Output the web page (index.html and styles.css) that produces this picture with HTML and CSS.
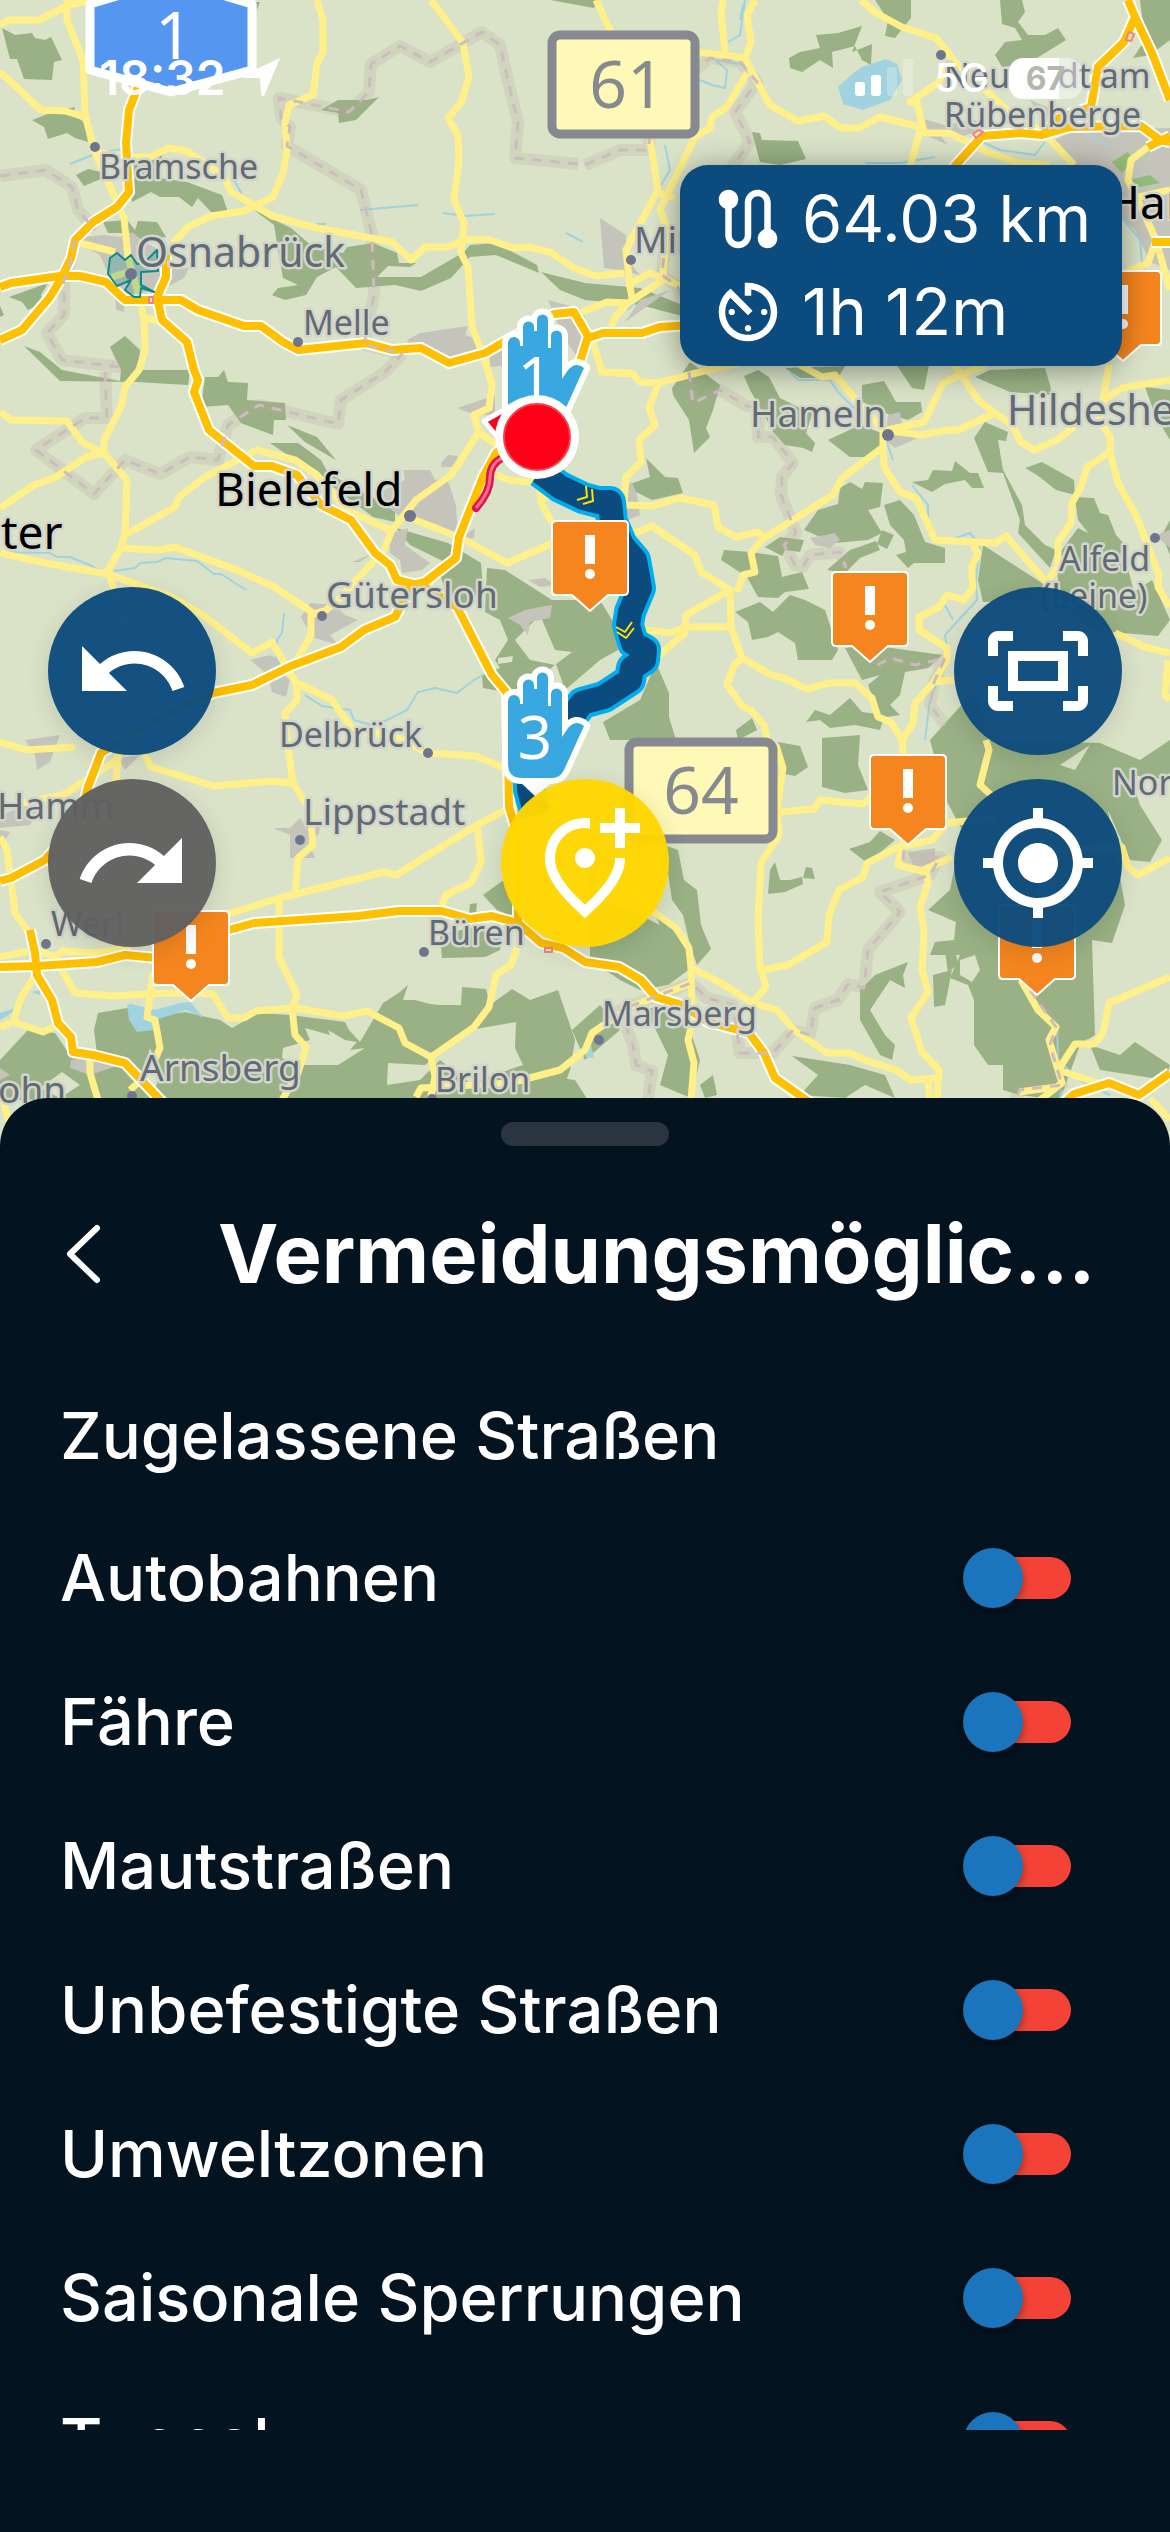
FILE: index.html
```html
<!DOCTYPE html>
<html lang="de">
<head>
    <meta charset="UTF-8">
    <meta name="viewport" content="width=device-width, initial-scale=1.0">
    <title>Vermeidungsmöglichkeiten</title>
    <link rel="stylesheet" href="styles.css">
</head>
<body>
    <div class="app">
        <!-- Map -->
        <section class="map-area">
            <svg class="map" viewBox="0 0 1170 1150" preserveAspectRatio="xMidYMin slice" role="img" aria-label="Karte">
                <defs>
                    <g id="warning">
                        <path class="warning-box" d="M-34 -90h68q4 0 4 4v66q0 4 -4 4H18L0 0L-18 -16H-34q-4 0 -4 -4v-66q0 -4 4 -4z"/>
                        <path fill="#fff" d="M-5 -76H5V-47H-5z"/>
                        <circle fill="#fff" cx="0" cy="-37" r="5"/>
                    </g>
                    <g id="hand">
                        <path fill="#fff" d="M518 422L536 439L554 422z"/>
                        <path class="hand" d="M508 343a6 6 0 0 1 12 0v3h3v-19a5.500 5.500 0 0 1 11 0v4h3v-11a5.500 5.500 0 0 1 11 0v28h3v-12a5.500 5.500 0 0 1 11 0v43l6 -9q8 -9 16 -2L564 412q-4 8 -12 8H522q-14 0 -14 -14z"/>
                    </g>
                    <g id="borders">
                        <path d="M0 176L46 170L72 187L78 210L95 230M75 240L70 265L64 280L64 315L47 333L62 360L120 367L112 362M105 372L107 418L85 418L36 450L94 494L125 460L160 474L190 457L218 460L228 425L259 405L338 424L341 400L385 372L403 353"/>
                        <path d="M578 164L515 158L518 122L510 90L500 45L482 32L430 62L400 46L371 64L369 92L349 112L279 98L281 118L290 127L287 146L361 190L372 235L374 295L364 345L400 353"/>
                        <path d="M585 165L620 150L648 150L655 100L710 58L740 62L757 82L735 112L750 142L730 170M665 240L662 275L678 287L700 362"/>
                        <path d="M689 372L693 403L720 390L745 405L760 410L758 437L773 437L793 463L782 477L781 495L796 533L784 545L795 565L803 567L810 555L840 552L846 568"/>
                        <path d="M877 665L891 658L915 665L945 658L934 682L930 705L945 725M904 850L903 860L940 857L930 875L880 892L900 912L868 950L864 988L848 984L838 1000L815 1008L810 1035L793 1030L773 1053L740 1053L733 1005L707 998L691 983L620 1010L633 1045L636 1065L652 1071L648 1100M1030 990L1056 1027L1050 1045L1062 1085L1020 1090L1015 1100"/>
                    </g>
                    <g id="motorways">
                        <path d="M138 87L129 110L126 143L129 192L117 207L93 222L75 240L71 258L62 277L50 297L22 330L0 340"/>
                        <path d="M0 287L11 283L60 276L80 276L106 282L125 300L181 300L198 310L244 326L261 326L283 342L298 350L366 343L392 350L421 348L449 363L485 353L504 342L554 314L574 312L588 336L580 362L560 400L496 453L483 477L459 537L456 558L425 582L412 585L395 617L364 630L341 647L291 666L252 685L213 693L160 717L101 753L88 787L80 820L45 860L11 878L0 881"/>
                        <path d="M588 338L603 333L642 333L660 327L690 325M166 248L166 277L157 297L162 320L187 342L194 370L198 380L194 392L209 430L254 466L272 466L297 475L321 505L351 520L375 553L390 565L397 580L425 587L457 607L492 675L507 693L509 807L518 837L518 922"/>
                        <path d="M0 967L37 966L97 962L125 955L157 958L229 930L254 923L358 916L399 911L442 911L470 919L492 916L518 923L541 943L563 948L585 962L619 967L641 980L656 997L682 1005L708 1022L749 1033L764 1053L775 1078L812 1104"/>
                        <path d="M30 930L35 953L37 975L52 1000L58 1023L71 1037L73 1052L93 1055L125 1063L144 1083L165 1105M1065 1102L1074 1094L1109 1083L1139 1095L1170 1073"/>
                        <path d="M1128 0L1135 17L1124 42L1098 67L1091 107L1059 118L1042 135L1020 133L982 136L953 168M1135 17L1152 53L1170 100M1042 135L1070 127L1141 126L1160 140L1170 142M1148 147L1170 136M1152 242L1170 242"/>
                    </g>
                    <path id="route" d="M540 472L560 487L583 498L598 502H610L612 522L622 545L635 560L640 588L630 612L628 625L633 643L645 650L644 660L632 668L630 680L604 697L582 703L570 720L545 740L528 765L529 790L536 815"/>
                </defs>

                <rect width="1170" height="1150" fill="#dae3c8"/>

                <g class="forest">
                    <path d="M2 28L15 35L32 33L35 38L45 40L51 37L62 60L54 62L52 80L24 79L17 59L10 59z"/>
                    <path d="M32 120L48 114L75 107L73 115L84 122L88 142L75 138L67 133L48 139L44 127z"/>
                    <path d="M76 175L88 169L101 172L103 178L84 186z"/>
                    <path d="M128 166L162 155L160 178L187 182L222 195L228 212L211 212L198 198L192 207L179 197L160 197L151 192L132 202z"/>
                    <path d="M103 222L127 220L135 230L138 221L157 222L166 237L142 240L132 233L108 233z"/>
                    <path d="M254 210L291 228L313 247L343 253L347 247L373 243L397 253L399 263L416 263L410 267L388 266L377 277L421 277L464 252L470 245L496 243L537 265L539 273L496 255L470 257L451 278L421 291L395 285L356 288L336 267L317 277L306 295L285 300L272 295L278 288L298 285L283 278L278 250L274 225z"/>
                    <path d="M541 272L585 283L640 288L690 308L690 318L640 305L585 300L560 290z"/>
                    <path d="M321 110L338 100L367 100L379 97L356 120L339 123L338 113z"/>
                    <path d="M9 297L48 283L41 295L43 302L28 310L22 302z"/>
                    <path d="M24 346L40 352L62 370L120 381L121 370L110 347L125 336L140 350L138 370L190 370L188 385L136 382L60 381z"/>
                    <path d="M0 306L4 315L0 317zM256 2L260 2L257 10z"/>
                    <path d="M205 377L218 377L224 370L228 382L248 383L247 400L285 403L286 420L274 420L273 435L241 423L228 405L201 407z"/>
                    <path d="M287 425L317 437L336 460L305 442zM270 443L298 443L321 460L328 473L395 510L395 522L373 517L324 480L298 462z"/>
                    <path d="M396 528L448 543L481 563L483 590L463 607L448 597L440 575L455 567L410 545z"/>
                    <path d="M487 568L505 570L552 600L600 600L612 620L618 650L600 660L565 690L556 664L520 695L483 688L482 675L500 668L495 660L508 640L500 620L485 612z"/>
                    <path d="M656 663L669 693L669 717L676 740L610 740L603 722L640 700z"/>
                    <path d="M630 484L650 477L646 458L665 477L678 478L683 493L652 500L630 489z"/>
                    <path d="M672 388L690 362L720 385L713 410L706 428L710 437L694 453L689 420L673 395z"/>
                    <path d="M744 376L758 370L769 377L780 398L800 408L813 412L806 433L815 443L812 452L803 448L785 445L774 433L750 390z"/>
                    <path d="M785 368L845 366L838 378L800 378zM890 355L930 360L924 390L912 388z"/>
                    <path d="M862 385L884 381L896 402L921 402L922 412L908 420L890 415L880 410L862 402z"/>
                    <path d="M828 440L860 425L887 435L872 457L850 457z"/>
                    <path d="M975 377L990 370L1045 368L1050 385L1052 395L1010 392z"/>
                    <path d="M974 438L985 422L1008 432L1006 441L998 440L1003 470L1022 505L1025 525L1045 545L1056 550L1050 568L1018 533L1020 520L1003 473L988 472z"/>
                    <path d="M912 482L928 480L933 470L952 471L955 461L970 473L978 473L984 488L972 488L965 480L945 484L932 492z"/>
                    <path d="M1025 468L1042 462L1074 480L1075 495L1056 490L1037 475z"/>
                    <path d="M804 530L818 510L838 504L840 488L850 482L862 489L865 482L883 483L880 507L868 510L882 533L868 540L835 543z"/>
                    <path d="M884 505L900 500L914 515L925 542L945 548L945 563L914 563L908 568L896 555L906 552L904 540L890 525z"/>
                    <path d="M765 547L780 537L804 540L800 552L785 550L782 556zM882 530L894 535L887 549L877 544z"/>
                    <path d="M827 570L850 550L876 541L880 550L860 558L845 573z"/>
                    <path d="M721 560L724 550L750 552L778 556L782 577L802 572L809 589L785 592L778 598L758 597L747 577z"/>
                    <path d="M983 545L1045 585L1030 600L983 602L978 580z"/>
                    <path d="M1075 497L1094 498L1100 513L1108 515L1116 535L1125 545L1120 555L1098 548L1090 535L1078 520z"/>
                    <path d="M1056 558L1078 528L1098 538L1104 548L1125 557L1134 592L1152 580L1170 620L1158 636L1090 630L1060 600z"/>
                    <path d="M1145 387L1170 390L1170 440L1155 415zM1162 535L1170 520V555z"/>
                    <path d="M735 612L760 602L773 612L790 595L805 600L825 610L838 650L832 660L798 660L795 643L778 632L768 637L752 640L748 622z"/>
                    <path d="M845 648L870 645L942 655L928 668L905 672L900 695L890 705L900 715L880 718L868 685L880 675L862 680z"/>
                    <path d="M806 722L815 710L830 715L850 698L862 712L885 715L880 730L855 725L830 728L820 720z"/>
                    <path d="M822 738L860 735L858 765L868 790L845 793L822 787z"/>
                    <path d="M736 730L752 718L757 730L738 740zM778 742L800 746L808 767L795 776L785 774z"/>
                    <path d="M930 740L975 690L990 740L1100 743L1140 760L1170 740L1170 780L1130 775L1140 805L1162 840L1150 862L1130 860L1108 810L1125 905L1112 943L1092 940L1095 1035L1080 1045L1060 1100L1020 1095L1003 1090L1003 1065L988 1065L974 1045L974 1000L968 985L950 978L960 955L930 955L935 942L954 940L956 922L928 910L950 890L962 830L946 800z"/>
                    <path d="M590 840L620 870L652 912L676 928L689 948L691 968L668 985L640 990L620 980L590 960z"/>
                    <path d="M664 845L678 850L684 880L697 890L701 925L711 949L697 965L690 945L683 915L672 900z"/>
                    <path d="M770 870L775 862L780 880L790 880L802 877L803 884L785 892L768 894zM803 878L806 867L812 868L815 879z"/>
                    <path d="M849 849L870 842L880 831L895 840L877 855L866 862z"/>
                    <path d="M860 990L875 975L908 962L903 975L905 988L890 980L870 1010L885 1035L895 1045L892 1060L880 1055L860 1020zM945 952L955 948L958 965L948 972z"/>
                    <path d="M933 975L952 970L945 1005L934 1007z"/>
                    <path d="M792 1056L850 1065L885 1075L895 1098L865 1085L845 1098L800 1095L818 1075z"/>
                    <path d="M646 1010L665 1003L690 1030L700 1060L691 1098L660 1085L668 1055z"/>
                    <path d="M700 1085L713 1075L717 1095L705 1098zM1090 1045L1120 1055L1135 1042L1170 1065L1165 1080L1100 1070z"/>
                    <path d="M483 895L505 879L520 920L497 910zM470 904L477 903L476 914L469 914z"/>
                    <path d="M440 935L470 928L503 930L500 950L485 957L442 958z"/>
                    <path d="M0 1060L28 1030L55 1033L70 1055L98 1062L94 1030L98 1013L127 1008L147 1018L185 1012L220 1020L232 1028L258 1013L290 1015L345 1022L349 1030L360 1042L383 1003L400 992L408 985L403 1000L415 1000L430 1004L440 1005L461 1005L462 987L486 989L490 1005L512 989L530 1000L558 990L575 1040L570 1070L560 1098L0 1100z"/>
                    <path d="M572 1030L600 1005L620 1030L585 1060zM620 1150H500V1070L575 1080z"/>
                    <path d="M550 0L600 0L594 8zM875 0L911 0L911 18L895 38L885 36L888 20z"/>
                    <path d="M789 58L800 52L820 48L816 35L838 33L862 26L852 52L872 44L871 65L862 60L855 46L832 52L833 68L820 60L802 72L790 68z"/>
                    <path d="M1000 0L1022 0L1025 12L1018 22L1028 35L1045 35L1058 28L1066 40L1045 53L1025 65L1002 67L995 55L1005 42L1022 40L1015 28L1002 24z"/>
                    <path d="M1140 0L1170 0L1170 40L1150 55L1133 58L1145 40z"/>
                    <path d="M752 132L760 133L762 140L798 141L806 159L780 165L760 162z"/>
                </g>

                <!-- Clearings inside the woods -->
                <g fill="#dae3c8">
                    <path d="M283 1048L310 1040L305 1028L330 1035L328 1030L345 1040L357 1042L350 1050L365 1048L338 1065L300 1065L282 1058z"/>
                    <path d="M388 1063L425 1065L470 1030L516 1022L515 1048L523 1065L470 1083L440 1060L420 1080L387 1085z"/>
                    <path d="M140 1085L150 1048L160 1075L152 1098zM40 1088L62 1072L80 1085L60 1098z"/>
                    <path d="M515 640L540 615L555 650L572 652L555 665L530 660zM498 658L513 656L512 662L498 664z"/>
                    <path d="M960 960L975 955L980 970L972 982L960 975zM1042 830L1060 900L1045 930L1036 890z"/>
                    <path d="M1060 765L1090 745L1075 770zM1085 1040L1120 1030L1120 1050z"/>
                    <path d="M594 880L600 860L650 905L660 925L630 910L600 900z"/>
                </g>

                <g class="urban">
                    <path d="M76 242L84 237L105 235L120 237L133 232L140 240L160 250L150 270L189 268L184 278L165 288L165 300L155 290L125 297L124 312L116 310L115 290L100 255z"/>
                    <path d="M407 340L420 333L468 326L465 335L480 340L475 350L460 360L430 352L410 345zM490 350L520 340L510 365L490 367z"/>
                    <path d="M548 300L585 310L580 360L565 340z"/>
                    <path d="M380 492L405 480L403 470L430 470L435 480L447 478L456 505L458 535L443 535L430 525L405 520L385 505z"/>
                    <path d="M389 540L395 532L408 528L405 545L430 563L422 570L402 573L400 560L390 553zM352 562L372 554L360 562zM458 540L475 528L474 538z"/>
                    <path d="M457 408L475 402L495 395L495 415L475 415zM441 463L448 455L458 456L455 467L442 467z"/>
                    <path d="M301 617L310 603L335 605L345 615L358 620L330 635L338 645L312 637z"/>
                    <path d="M250 660L270 655L285 663L283 675L290 680L286 697L272 692L268 675z"/>
                    <path d="M508 618L525 610L540 607L552 605L550 618L530 622L528 635L520 625zM528 580L545 578L555 585L540 587z"/>
                    <path d="M273 828L290 828L300 818L305 825L322 820L318 835L308 840L315 858L290 858L290 835z"/>
                    <path d="M25 740L60 735L50 762L37 770L35 755zM118 758L140 755L125 770z"/>
                    <path d="M0 815L45 800L30 825L0 828zM0 830L10 832L0 848z"/>
                    <path d="M71 1060L85 1058L120 1065L90 1075L70 1068zM0 1068L10 1075L0 1080z"/>
                    <path d="M600 218L626 235L626 258L640 275L620 270L604 268zM640 300L670 290L625 322z"/>
                    <path d="M624 488L632 482L637 495L640 515L628 520zM810 538L835 533L840 540L830 548L815 545z"/>
                    <path d="M888 415L900 412L902 425L920 437L895 448L885 440zM1155 535L1170 530V548z"/>
                    <path d="M920 118L945 125L975 120L985 130L955 138L938 132L948 145L925 135zM1030 100L1050 108L1045 125z"/>
                    <path d="M1050 142L1075 130L1170 128L1170 270L1150 262L1135 230L1110 205L1080 170L1060 150z"/>
                    <path d="M908 852L935 848L935 868L915 872zM516 785L540 790L560 800L550 810L516 805z"/>
                </g>
                <g fill="#92bd79">
                    <path d="M1112 162L1128 152L1133 160L1122 173zM1130 180L1150 175L1160 183L1140 187z"/>
                </g>

                <g class="water-area">
                    <path d="M838 87L851 75L862 67L886 59L897 64L902 80L890 100L863 110L843 104z"/>
                    <path d="M127 1005L131 1004L155 1010L180 1003L190 1002L204 1018L186 1010L153 1021L154 1030L137 1032L129 1020z"/>
                    <path d="M0 1013L25 1005L0 1020zM32 992L40 990L40 995zM590 1040L594 1058L585 1057z"/>
                </g>
                <g class="water">
                    <path d="M360 210L418 205M70 164L95 154L121 149M234 180L242 194M316 224L326 224M443 213L465 216L495 214M566 233L583 242"/>
                    <path d="M0 552L50 553L57 557L70 557L92 566L100 571M114 571L135 568L140 563L157 562L166 558L197 561L214 574L221 574L246 590"/>
                    <path d="M284 613L282 633L277 640L276 665L281 690M305 695L322 706L350 710L354 720L375 726L407 710L418 692L435 688L457 693L474 680L486 673"/>
                    <path d="M745 0L740 35L728 42M700 80L712 85L725 88L727 70L715 60L745 65M665 145L670 170L655 195M627 310L640 298"/>
                    <path d="M790 372L798 380L830 380L838 392L858 412M886 440L893 460M912 485L928 505L928 525"/>
                    <path d="M950 540L970 533L980 545L976 580L977 600L945 635L948 655L930 700L925 740M945 605L953 620"/>
                    <path d="M978 140L1000 150L1035 155L1045 142M1085 133L1110 147M1120 215L1140 240L1142 262M865 163L900 163L935 157M740 20L743 5"/>
                    <path d="M1057 1030L1058 1060L1080 1080L1110 1095M1062 1090L1057 1110M10 812L22 811"/>
                </g>

                <use href="#borders" class="border-halo"/>

                <g class="road">
                    <path d="M0 25L9 20L39 20L69 5L90 0M67 0L67 20L83 60L85 115L95 152L108 182L124 218L128 257L140 300L144 320L145 350L139 370L125 387L121 407L104 440L104 453L127 480L125 533L121 548L108 570L114 590L128 630"/>
                    <path d="M0 72L11 82L41 110L65 111L85 117M80 243L115 252M112 277L135 270M144 318L160 321"/>
                    <path d="M95 152L123 157L151 157L168 148L187 151L224 177L231 192L254 205L272 216L317 228L392 242L411 260L425 247L448 247L464 240L487 239L513 248L528 247L550 252L574 268L596 276L624 273"/>
                    <path d="M317 0L323 20L323 52L317 63L313 95L289 105L285 123L287 150L283 173L273 197L254 206L244 211L211 216L188 227L173 243"/>
                    <path d="M431 0L446 20L463 43L469 77L461 103L448 118L458 135L459 160L454 200L464 223L461 253L468 267L472 327L485 360L492 385L489 408L474 415L479 432L451 475L416 500L392 530L384 550L338 600L326 610L311 615L311 635L297 660"/>
                    <path d="M479 432L500 448M484 470L509 480L539 483L541 502L552 523M410 518L461 538L507 563L560 540"/>
                    <path d="M0 412L11 420L67 421L82 442L103 453L86 457L56 477L34 485L0 508"/>
                    <path d="M125 535L175 507L179 497L205 477L257 450L295 460L317 475L347 510L390 530"/>
                    <path d="M0 553L45 563L108 574L172 597L203 615L252 653L272 642L297 685L297 700L285 713L287 740L293 783L310 810L313 845L298 858L295 893"/>
                    <path d="M121 548L159 550L175 547L242 572L276 588L313 613M297 683L332 700L351 727L403 740L427 753L476 756L504 768"/>
                    <path d="M144 753L151 767L214 786L272 781L293 783M0 742L26 750L75 747M0 808L22 803L63 795L117 760L120 740L116 780L110 830"/>
                    <path d="M0 837L7 850L15 913L32 937M160 935L224 915L280 898L384 872L396 875L477 825L511 807L585 800M477 825L481 862L471 883L446 895L440 910"/>
                    <path d="M279 900L279 957L297 995L292 1008L295 1035L306 1047L298 1073L282 1100M0 957L34 950L56 957L63 951L93 953L131 948"/>
                    <path d="M58 963L75 993L112 996L168 993L213 994L228 1018L244 1018L256 1011L295 1008L343 1016L367 1011L399 1028L405 1043L431 1057L474 1027L489 1007L496 975L511 965L517 948M431 1057L435 1077L430 1100"/>
                    <path d="M153 973L147 1017L155 1020L160 1048L149 1073L130 1090M34 977L21 998L13 1022L0 1027M13 1022L43 1032L58 1025M90 1057L90 1073L98 1100"/>
                    <path d="M416 1097L421 1088L510 1083L560 1070L585 1050L592 1033L630 1007L691 983M0 1085L15 1150"/>
                    <path d="M620 880L654 912L676 928L689 948L691 968L721 983L753 1003L777 1010L794 1030L827 1053L850 1053L865 1060L896 1070L911 1080L937 1078M691 968L692 1023L688 1040L694 1063L691 1100"/>
                    <path d="M753 1002L766 987L760 967L758 920L761 863L779 835L777 810L783 768L776 745M762 970L788 965L827 942L829 915L839 890L863 877L867 863L896 848L932 840L947 823L995 818"/>
                    <path d="M779 812L814 809L820 800L863 804L885 785M902 738L904 770M904 838L898 865L926 872L928 883L920 907L924 930L922 970L928 992L911 1018L922 1052L939 1070L937 1100M919 872L952 857M928 1081L930 1100"/>
                    <path d="M986 740L989 750L980 785L991 795M1080 850L1122 847L1128 867L1138 875L1170 858M1170 977L1109 1003L1103 1033L1094 1044L1075 1044L1058 1070L1062 1083L1040 1100M1021 980L1038 1010L1056 1027L1049 1040L1058 1070L1098 1083M1019 1092L1057 1087M1150 1098L1170 1120"/>
                    <path d="M600 372L633 374L640 382L658 383L700 372L740 363M658 385L649 407L655 425L639 440L641 462L626 477L624 505L652 506L680 498L714 505L718 527L736 537L758 532L764 538L833 495L842 478L883 447L883 430"/>
                    <path d="M764 538L751 553L755 572L743 575L737 592M620 537L635 533L652 526L695 555L701 572L730 590L686 615L685 633L656 658M730 590L731 627L742 658L771 675L784 678L807 689L829 683L855 683L872 698L878 717L891 722L902 740"/>
                    <path d="M637 623L646 630L671 633L686 627L731 627M742 658L734 665L727 685L743 707L751 710L764 725L767 740"/>
                    <path d="M883 447L884 467L900 492L916 498L935 540L995 543L1006 536L1046 582L1058 567L1058 542L1071 523L1072 503L1081 487L1087 467L1110 452M1046 582L1060 600"/>
                    <path d="M973 545L978 553L971 568L973 588L964 600L947 595L939 607L919 617L919 630L947 648L947 660L934 682L915 703L913 723L902 740M934 682L954 680"/>
                    <path d="M800 365L822 377L835 375L863 408L883 430L921 435L947 430L958 430L995 413M887 430L924 422L943 383L960 375L985 365M955 365L978 400L995 413L1012 425L1021 442L1034 450L1057 440L1074 427"/>
                    <path d="M1109 365L1103 400L1100 420L1110 437L1110 452L1118 483L1137 517L1152 557L1159 575L1158 587L1170 607M1103 400L1122 388L1170 380M1115 633L1145 647L1170 653M1168 660L1165 695L1170 700"/>
                    <path d="M596 0L611 32M723 0L721 13L725 52M755 0L747 15L751 43L745 58L699 52M745 58L758 83L770 105L798 121L824 116L841 128L859 128L880 117L921 127L926 133L949 133L990 153L1018 163L1050 165M921 127L910 167"/>
                    <path d="M861 0L876 13L902 27L936 38L956 63L1007 110L1044 133L1074 165M938 83L910 102L917 103L924 132M947 65L938 83"/>
                    <path d="M747 73L727 107L712 117L710 128L695 137L660 210L667 227L663 278M650 140L658 190L626 250L630 287L632 298M658 193L675 198M628 285L650 273L690 290M663 280L628 303L607 302L577 314M628 303L615 317L611 328"/>
                    <path d="M592 340L602 372L632 373M1148 147L1131 160L1128 180L1141 207L1156 240L1148 263L1126 272M1135 198L1170 190M1156 240L1170 290M541 502L560 480"/>
                </g>

                <use href="#motorways" class="motorway-casing"/>
                <use href="#motorways" class="motorway"/>
                <use href="#borders" class="border"/>

                <!-- Low emission zone and closures -->
                <path class="zone" d="M110 258L117 253L125 260L131 255L137 264L145 262L157 250L158 271L141 272L141 285L154 292L141 288L140 297L134 297L125 290L131 280L117 286L108 274z"/>
                <g class="closure">
                    <path d="M149 297h4v6h-4z"/>
                    <path d="M1129 32l5 2l-3 7l-5 -1z"/>
                    <path d="M973 134l6 -4l4 2l-7 6z"/>
                    <path d="M545 948h7v4h-7z"/>
                </g>
                <path class="jam" d="M502 458Q490 464 490 478T476 508"/>
                <path class="jam-core" d="M502 458Q490 464 490 478T476 508"/>

                <g class="city-dot">
                    <circle cx="95" cy="147" r="5"/>
                    <circle cx="131" cy="274" r="6"/>
                    <circle cx="298" cy="342" r="5"/>
                    <circle cx="410" cy="516" r="6"/>
                    <circle cx="322" cy="616" r="5"/>
                    <circle cx="428" cy="753" r="5"/>
                    <circle cx="300" cy="840" r="5"/>
                    <circle cx="46" cy="944" r="5"/>
                    <circle cx="424" cy="952" r="5"/>
                    <circle cx="132" cy="1096" r="5"/>
                    <circle cx="432" cy="1099" r="5"/>
                    <circle cx="599" cy="1040" r="5"/>
                    <circle cx="888" cy="435" r="6"/>
                    <circle cx="1155" cy="538" r="5"/>
                    <circle cx="631" cy="260" r="5"/>
                    <circle cx="941" cy="55" r="5"/>
                </g>

                <g class="place">
                    <text x="99" y="179">Bramsche</text>
                    <text x="303" y="335">Melle</text>
                    <text x="279" y="747">Delbrück</text>
                    <text x="51" y="936">Werl</text>
                    <text x="428" y="945">Büren</text>
                    <text x="435" y="1092">Brilon</text>
                    <text x="602" y="1026">Marsberg</text>
                    <text x="1112" y="795">Northeim</text>
                    <text x="1059" y="571">Alfeld</text>
                    <text x="1041" y="608">(Leine)</text>
                    <text x="944" y="88">Neustadt am</text>
                    <text x="944" y="127">Rübenberge</text>
                </g>
                <g class="place place-medium">
                    <text x="326" y="608">Gütersloh</text>
                    <text x="-3" y="819">Hamm</text>
                    <text x="303" y="825">Lippstadt</text>
                    <text x="140" y="1081">Arnsberg</text>
                    <text x="-2" y="1103">ohn</text>
                    <text x="750" y="427">Hameln</text>
                    <text x="634" y="253">Minden</text>
                </g>
                <g class="place place-large">
                    <text x="136" y="267">Osnabrück</text>
                    <text x="1007" y="425">Hildesheim</text>
                </g>
                <g class="place place-city">
                    <text x="215" y="506">Bielefeld</text>
                    <text x="1" y="549">ter</text>
                    <text x="1106" y="219">Hannover</text>
                </g>

                <!-- Road shields -->
                <path d="M90 4L130 -8H212L252 4V70L171 92L90 70z" fill="#5596f0" stroke="#fff" stroke-width="9" stroke-linejoin="round"/>
                <text class="shield-text shield-text-motorway" x="174" y="59">1</text>
                <rect class="shield" x="552" y="35" width="143" height="99" rx="8"/>
                <text class="shield-text" x="627" y="108">61</text>
                <rect class="shield" x="629" y="742" width="144" height="97" rx="8"/>
                <text class="shield-text" x="701" y="814">64</text>

                <!-- Planned route -->
                <use href="#route" class="route-line-edge"/>
                <use href="#route" class="route-line"/>
                <path class="route-chevron" d="M586 486L587 497L577 500M592 489L593 501L583 504M616 627L625 632L632 622M617 632L626 638L634 628"/>

                <use href="#warning" x="590" y="611"/>
                <use href="#warning" x="870" y="662"/>
                <use href="#warning" x="908" y="845"/>
                <use href="#warning" x="1037" y="995"/>
                <use href="#warning" x="191" y="1001"/>
                <use href="#warning" x="1123" y="361"/>

                <use href="#hand"/>
                <use href="#hand" y="358"/>
                <text class="hand-text" x="535" y="400">1</text>
                <text class="hand-text" x="535" y="759">3</text>

                <path fill="#fb0020" stroke="#fff" stroke-width="5" d="M484 421L520 401L508 450z"/>
                <circle cx="537" cy="437" r="42" fill="#fff"/>
                <circle cx="537" cy="437" r="33" fill="#ff0019" stroke="#fd3b4a" stroke-width="2"/>
            </svg>

            <div class="status-bar">
                <div class="status-group">
                    <span class="clock">18:32</span>
                    <svg class="location-arrow" viewBox="0 0 40 40"><path d="M38 0L22 38Q20 39 19 36L18 20L2 20Q-1 19 1 17z" fill="#fff"/></svg>
                </div>
                <div class="status-group status-group-right">
                    <svg class="signal" viewBox="0 0 60 38" fill="#fff"><rect x="1" y="23" width="10" height="14" rx="3"/><rect x="17" y="16" width="10" height="21" rx="3"/><g opacity=".25"><rect x="33" y="8" width="10" height="29" rx="3"/><rect x="49" width="10" height="37" rx="3"/></g></svg>
                    <span class="network">5G</span>
                    <span class="battery">67</span>
                </div>
            </div>

            <div class="route-info">
                <div class="route-row">
                    <svg viewBox="0 0 24 24"><path d="M19 15.180V7c0-2.210-1.790-4-4-4s-4 1.790-4 4v10c0 1.100-.9 2-2 2s-2-.9-2-2V8.820C8.160 8.400 9 7.300 9 6c0-1.660-1.340-3-3-3S3 4.340 3 6c0 1.300.84 2.400 2 2.820V17c0 2.210 1.790 4 4 4s4-1.790 4-4V7c0-1.100.9-2 2-2s2 .9 2 2v8.180c-1.160.41-2 1.510-2 2.820 0 1.660 1.340 3 3 3s3-1.340 3-3c0-1.300-.84-2.400-2-2.820z"/></svg>
                    <span>64.03 km</span>
                </div>
                <div class="route-row">
                    <svg viewBox="0 0 24 24"><path d="M11 17c0 .55.45 1 1 1s1-.45 1-1-.45-1-1-1-1 .45-1 1zm0-14v4h2V5.080c3.390.49 6 3.390 6 6.920 0 3.870-3.130 7-7 7s-7-3.130-7-7c0-1.680.59-3.220 1.580-4.420L12 13l1.410-1.410-6.800-6.800v.02C4.420 6.450 3 9.050 3 12c0 4.970 4.020 9 9 9 4.970 0 9-4.030 9-9s-4.030-9-9-9h-1zm7 9c0-.55-.45-1-1-1s-1 .45-1 1 .45 1 1 1 1-.45 1-1zM6 12c0 .55.45 1 1 1s1-.45 1-1-.45-1-1-1-1 .45-1 1z"/></svg>
                    <span>1h 12m</span>
                </div>
            </div>

            <div class="map-controls">
                <div class="control-column">
                    <button class="map-btn" aria-label="Rückgängig"><svg viewBox="0 0 24 24"><path d="M12.500 8c-2.650 0-5.050.99-6.900 2.600L2 7v9h9l-3.620-3.620c1.390-1.160 3.160-1.880 5.120-1.880 3.540 0 6.550 2.310 7.600 5.500l2.370-.78C21.080 11.030 17.150 8 12.500 8z"/></svg></button>
                    <button class="map-btn map-btn-muted" aria-label="Wiederholen"><svg viewBox="0 0 24 24"><path d="M18.400 10.600C16.550 8.990 14.150 8 11.500 8c-4.650 0-8.580 3.030-9.960 7.220L3.900 16c1.050-3.190 4.050-5.500 7.600-5.500 1.950 0 3.730.72 5.120 1.880L13 16h9V7l-3.600 3.600z"/></svg></button>
                </div>
                <button class="map-btn map-btn-add" aria-label="Wegpunkt hinzufügen"><svg viewBox="0 0 24 24"><path d="M20 1v3h3v2h-3v3h-2V6h-3V4h3V1h2zm-8 12c1.100 0 2-.9 2-2s-.9-2-2-2-2 .9-2 2 .9 2 2 2zm1-9.940v2.020A6.530 6.530 0 0 0 12 5c-3.350 0-6 2.570-6 6.200 0 2.340 1.950 5.440 6 9.140 4.050-3.700 6-6.790 6-9.140V11h2v.2c0 3.320-2.670 7.250-8 11.800-5.330-4.550-8-8.480-8-11.800C4 6.220 7.800 3 12 3c.34 0 .67.02 1 .06z"/></svg></button>
                <div class="control-column">
                    <button class="map-btn" aria-label="Route einpassen"><svg viewBox="0 0 24 24"><path d="M17 4h3c1.100 0 2 .9 2 2v3h-2V6h-3V4zM4 9V6h3V4H4c-1.100 0-2 .9-2 2v3h2zm16 6v3h-3v2h3c1.100 0 2-.9 2-2v-3h-2zM7 18H4v-3H2v3c0 1.100.9 2 2 2h3v-2zM16 10v4H8v-4h8m2-2H6v8h12V8z"/></svg></button>
                    <button class="map-btn" aria-label="Mein Standort"><svg viewBox="0 0 24 24"><path d="M12 8c-2.210 0-4 1.790-4 4s1.790 4 4 4 4-1.790 4-4-1.790-4-4-4zm8.940 3c-.46-4.170-3.770-7.480-7.940-7.940V1h-2v2.060C6.830 3.520 3.520 6.830 3.060 11H1v2h2.060c.46 4.170 3.770 7.480 7.940 7.940V23h2v-2.060c4.170-.46 7.480-3.770 7.940-7.940H23v-2h-2.060zM12 19c-3.870 0-7-3.130-7-7s3.130-7 7-7 7 3.130 7 7-3.130 7-7 7z"/></svg></button>
                </div>
            </div>
        </section>

        <!-- Avoidance options -->
        <section class="sheet">
            <div class="handle"></div>
            <div class="sheet-header">
                <button class="back-btn" aria-label="Zurück"><svg viewBox="0 0 36 60"><path d="M32 4L5 30L32 56"/></svg></button>
                <h1>Vermeidungsmöglichkeiten</h1>
            </div>
            <div class="options">
                <h2>Zugelassene Straßen</h2>
                <label class="option"><span>Autobahnen</span><input type="checkbox" class="switch" role="switch"></label>
                <label class="option"><span>Fähre</span><input type="checkbox" class="switch" role="switch"></label>
                <label class="option"><span>Mautstraßen</span><input type="checkbox" class="switch" role="switch"></label>
                <label class="option"><span>Unbefestigte Straßen</span><input type="checkbox" class="switch" role="switch"></label>
                <label class="option"><span>Umweltzonen</span><input type="checkbox" class="switch" role="switch"></label>
                <label class="option"><span>Saisonale Sperrungen</span><input type="checkbox" class="switch" role="switch"></label>
                <label class="option"><span>Tunnel</span><input type="checkbox" class="switch" role="switch"></label>
            </div>
        </section>
    </div>
</body>
</html>
```

FILE: styles.css
```css
* { margin: 0; padding: 0; box-sizing: border-box; }
body { font-family: Inter, "Liberation Sans", sans-serif; background: #03131f; color: white; }
button { border: none; background: none; color: inherit; cursor: pointer; }
svg { display: block; }

.app { display: flex; flex-direction: column; height: 100vh; overflow: hidden; }

/* Map */
.map-area { position: relative; flex: none; height: 1098px; padding: 0 48px; display: flex; flex-direction: column; }
.map { position: absolute; top: 0; left: 0; width: 100%; height: 1150px; }
.map path { stroke-linejoin: round; }
.forest { fill: #99b184; }
.urban { fill: #c5c4ba; }
.water-area { fill: #a0d2df; }
.water { fill: none; stroke: #a0d2df; stroke-width: 2; }
.border-halo { fill: none; stroke: #b8ab9c; stroke-opacity: 0.25; stroke-width: 12; }
.border { fill: none; stroke: #cbbcbd; stroke-width: 3; stroke-dasharray: 10 8; }
.road { fill: none; stroke: #fff08a; stroke-width: 7; }
.motorway-casing { fill: none; stroke: #fff; stroke-width: 12; }
.motorway { fill: none; stroke: #ffc000; stroke-width: 8; }
.zone { fill: #0f8a8a; fill-opacity: 0.25; stroke: #0f8a8a; stroke-width: 2; }
.closure { fill: #fff08a; stroke: #ef7f8b; stroke-width: 2; }
.jam { fill: none; stroke: #d91650; stroke-width: 8; stroke-linecap: round; }
.jam-core { fill: none; stroke: #ff6d88; stroke-width: 3; }
.city-dot { fill: #70758f; }

.place { font-family: "Noto Sans", sans-serif; font-size: 34px; fill: #636b72; stroke: #d2d5cc; stroke-width: 5px; stroke-linejoin: round; paint-order: stroke; }
.place-medium { font-size: 37px; }
.place-large { font-size: 41px; }
.place-city { font-size: 46px; fill: #000; }
.shield { fill: #fff9b8; stroke: #868a90; stroke-width: 9; }
.shield-text { font-family: "Noto Sans", sans-serif; font-size: 66px; text-anchor: middle; fill: #868a90; }
.shield-text-motorway { fill: #fff; }
.route-line-edge { fill: none; stroke: #00adef; stroke-width: 32; }
.route-line { fill: none; stroke: #0c4b7d; stroke-width: 24; }
.route-chevron { fill: none; stroke: #ffe000; stroke-width: 2; }
.warning-box { fill: #f5861f; stroke: #fff; stroke-width: 2; }
.hand { fill: #3aa8e0; stroke: #fff; stroke-width: 12; paint-order: stroke; }
.hand-text { font-family: "Noto Sans", sans-serif; font-size: 60px; text-anchor: middle; fill: #fff; }

/* Status bar */
.status-bar { position: relative; flex: none; height: 156px; padding: 0 40px 0 51px; display: flex; justify-content: space-between; align-items: center; }
.status-group { display: flex; align-items: center; gap: 16px; }
.status-group-right { gap: 20px; }
.clock { font-size: 48px; font-weight: 600; line-height: 58px; }
.location-arrow { width: 40px; height: 40px; }
.signal { width: 60px; height: 38px; }
.network { font-size: 40px; font-weight: 500; line-height: 48px; }
.battery { width: 73px; height: 41px; border-radius: 14px; background: linear-gradient(to right, #fff 68%, rgba(255,255,255,0.45) 68%); color: #b4b8ac; font-size: 32px; font-weight: 700; line-height: 41px; text-align: center; }

/* Distance and duration */
.route-info { position: relative; align-self: flex-end; margin-top: 9px; width: 442px; padding: 15px 29px; display: flex; flex-direction: column; gap: 15px; background: #0c4b7d; border-radius: 28px; box-shadow: 0 4px 30px rgba(0,0,0,0.4); }
.route-row { display: flex; align-items: center; gap: 15px; height: 78px; font-size: 65px; line-height: 78px; white-space: nowrap; }
.route-row svg { flex: none; width: 78px; height: 78px; fill: currentColor; }

/* Map buttons */
.map-controls { position: relative; margin-top: auto; margin-bottom: 151px; display: flex; justify-content: space-between; align-items: flex-end; }
.control-column { display: flex; flex-direction: column; gap: 24px; }
.map-btn { width: 168px; height: 168px; border-radius: 50%; display: flex; align-items: center; justify-content: center; background: rgba(12,75,125,0.96); box-shadow: 0 6px 24px rgba(0,0,0,0.12); }
.map-btn svg { width: 120px; height: 120px; fill: white; }
.map-btn-muted { background: rgba(96,96,96,0.96); }
.map-btn-add { background: rgba(255,214,0,0.96); }

/* Bottom sheet */
.sheet { position: relative; flex: 1; min-height: 0; padding: 24px 60px 102px; display: flex; flex-direction: column; background: #03131f; border-radius: 48px 48px 0 0; }
.handle { flex: none; align-self: center; width: 168px; height: 24px; border-radius: 12px; background: #2a3540; }
.sheet-header { flex: none; height: 216px; display: flex; align-items: center; gap: 112px; }
.back-btn { flex: none; padding: 0 5px; }
.back-btn svg { width: 36px; height: 60px; fill: none; stroke: white; stroke-width: 6; stroke-linecap: round; stroke-linejoin: round; }
h1 { flex: 1; min-width: 0; font-size: 81px; font-weight: 700; line-height: 96px; overflow: hidden; text-overflow: ellipsis; white-space: nowrap; }
.options { flex: 1; min-height: 0; overflow: hidden; }
h2 { padding-top: 4px; font-size: 65px; font-weight: 500; line-height: 140px; }
.option { display: flex; align-items: center; justify-content: space-between; height: 144px; padding-right: 39px; font-size: 65px; font-weight: 500; line-height: 144px; cursor: pointer; }
.switch { appearance: none; position: relative; width: 102px; height: 42px; border-radius: 21px; background: #f44336; cursor: pointer; }
.switch::before { content: ''; position: absolute; top: -9px; left: -6px; width: 60px; height: 60px; border-radius: 50%; background: #1b75bc; box-shadow: 0 4px 8px rgba(0,0,0,0.35); }
.switch:checked::before { left: 48px; }
```
